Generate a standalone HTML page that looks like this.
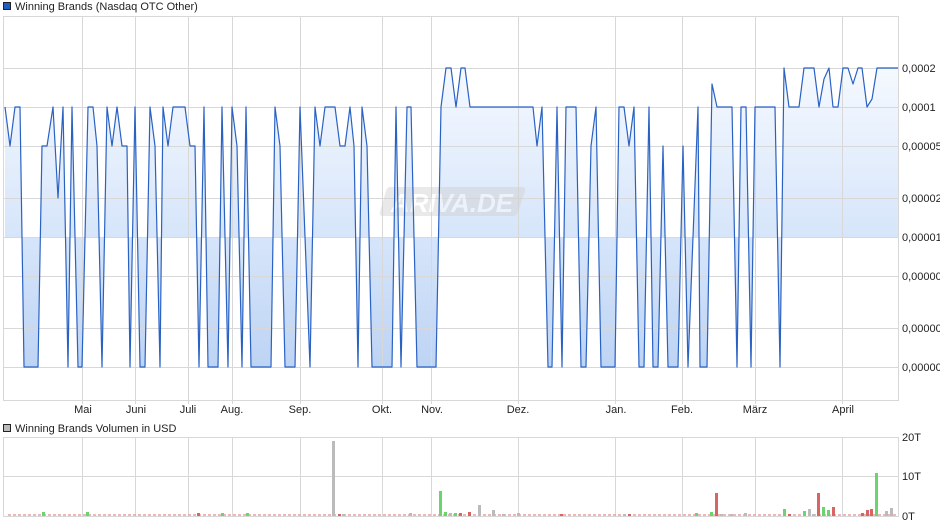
<!DOCTYPE html>
<html><head><meta charset="utf-8"><style>
html,body{margin:0;padding:0;background:#fff;}
body{width:940px;height:526px;overflow:hidden;font-family:"Liberation Sans",sans-serif;}
svg{display:block}
text{font-family:"Liberation Sans",sans-serif;font-size:11px;fill:#222}
</style></head><body>
<svg width="940" height="526" viewBox="0 0 940 526" xmlns="http://www.w3.org/2000/svg">
<defs>
<linearGradient id="g" gradientUnits="userSpaceOnUse" x1="0" y1="68" x2="0" y2="367">
<stop offset="0" stop-color="#f5f9ff"/>
<stop offset="0.565" stop-color="#d6e5fa"/>
<stop offset="1" stop-color="#bed4f4"/>
</linearGradient>
</defs>
<rect x="3.5" y="2.5" width="7" height="7" fill="#1f5fbf" stroke="#222" stroke-width="1"/>
<text x="15" y="10">Winning Brands (Nasdaq OTC Other)</text>
<polygon fill="url(#g)" points="5,237 5,107 10,146 15,107 20,107 24,367 38,367 42,146 47,146 53,107 58,198 63,107 68,367 72,107 78,367 82,367 88,107 93,107 97,146 102,367 107,107 112,146 117,107 122,146 127,146 130,367 135,107 140,367 145,367 150,107 155,146 160,367 163,107 168,146 173,107 185,107 190,146 195,146 199,367 204,107 208,367 218,367 222,107 228,367 232,107 237,146 242,367 246,107 251,367 271,367 275,107 280,146 285,367 295,367 300,107 310,367 315,107 320,146 325,107 335,107 340,146 345,146 350,107 354,146 358,367 362,107 367,146 372,367 392,367 396,107 401,367 407,107 411,107 417,367 436,367 441,107 446,68 451,68 456,107 461,68 465,68 470,107 533,107 537,146 542,107 548,367 552,367 557,107 562,367 566,107 576,107 581,367 586,367 591,146 596,107 601,367 615,367 619,107 624,107 629,146 634,107 639,367 644,367 649,107 653,367 658,367 663,146 668,367 678,367 683,146 688,367 698,107 700,367 707,367 712,84 717,107 732,107 737,367 741,107 746,107 751,367 755,107 775,107 780,367 784,68 789,107 799,107 804,68 814,68 819,107 824,79 829,68 833,107 838,107 843,68 848,68 853,84 858,68 862,68 867,107 872,99 877,68 898,68 898,237"/>
<g stroke="#d8d8d8" stroke-width="1">
<line x1="3" y1="16.5" x2="898" y2="16.5"/>
<line x1="3" y1="68.5" x2="898" y2="68.5"/>
<line x1="3" y1="107.5" x2="898" y2="107.5"/>
<line x1="3" y1="146.5" x2="898" y2="146.5"/>
<line x1="3" y1="198.5" x2="898" y2="198.5"/>
<line x1="3" y1="237.5" x2="898" y2="237.5"/>
<line x1="3" y1="276.5" x2="898" y2="276.5"/>
<line x1="3" y1="328.5" x2="898" y2="328.5"/>
<line x1="3" y1="367.5" x2="898" y2="367.5"/>
<line x1="3.5" y1="16" x2="3.5" y2="401"/>
<line x1="898.5" y1="16" x2="898.5" y2="401"/>
<line x1="3" y1="400.5" x2="898" y2="400.5"/>
<line x1="82.5" y1="16" x2="82.5" y2="404"/>
<line x1="135.5" y1="16" x2="135.5" y2="404"/>
<line x1="188.5" y1="16" x2="188.5" y2="404"/>
<line x1="232.5" y1="16" x2="232.5" y2="404"/>
<line x1="300.5" y1="16" x2="300.5" y2="404"/>
<line x1="382.5" y1="16" x2="382.5" y2="404"/>
<line x1="431.5" y1="16" x2="431.5" y2="404"/>
<line x1="518.5" y1="16" x2="518.5" y2="404"/>
<line x1="615.5" y1="16" x2="615.5" y2="404"/>
<line x1="682.5" y1="16" x2="682.5" y2="404"/>
<line x1="755.5" y1="16" x2="755.5" y2="404"/>
<line x1="842.5" y1="16" x2="842.5" y2="404"/>
</g>
<g opacity="0.45">
<path d="M390 187 H522 Q526 187 525 191 L518 212 Q517 216 513 216 H383 Q379 216 380 212 L386 191 Q387 187 390 187 Z" fill="#d0d0d0"/>
<text x="452" y="212" text-anchor="middle" font-style="italic" font-weight="bold" style="font-size:26px;fill:#fff">ARIVA.DE</text>
</g>
<polyline fill="none" stroke="#2a62c4" stroke-width="1.2" stroke-linejoin="round" points="5,107 10,146 15,107 20,107 24,367 38,367 42,146 47,146 53,107 58,198 63,107 68,367 72,107 78,367 82,367 88,107 93,107 97,146 102,367 107,107 112,146 117,107 122,146 127,146 130,367 135,107 140,367 145,367 150,107 155,146 160,367 163,107 168,146 173,107 185,107 190,146 195,146 199,367 204,107 208,367 218,367 222,107 228,367 232,107 237,146 242,367 246,107 251,367 271,367 275,107 280,146 285,367 295,367 300,107 310,367 315,107 320,146 325,107 335,107 340,146 345,146 350,107 354,146 358,367 362,107 367,146 372,367 392,367 396,107 401,367 407,107 411,107 417,367 436,367 441,107 446,68 451,68 456,107 461,68 465,68 470,107 533,107 537,146 542,107 548,367 552,367 557,107 562,367 566,107 576,107 581,367 586,367 591,146 596,107 601,367 615,367 619,107 624,107 629,146 634,107 639,367 644,367 649,107 653,367 658,367 663,146 668,367 678,367 683,146 688,367 698,107 700,367 707,367 712,84 717,107 732,107 737,367 741,107 746,107 751,367 755,107 775,107 780,367 784,68 789,107 799,107 804,68 814,68 819,107 824,79 829,68 833,107 838,107 843,68 848,68 853,84 858,68 862,68 867,107 872,99 877,68 898,68"/>
<text x="902" y="72">0,0002</text>
<text x="902" y="111">0,0001</text>
<text x="902" y="150">0,00005</text>
<text x="902" y="202">0,00002</text>
<text x="902" y="241">0,00001</text>
<text x="902" y="280">0,000005</text>
<text x="902" y="332">0,000002</text>
<text x="902" y="371">0,000001</text>
<g text-anchor="middle">
<text x="83" y="413">Mai</text><text x="136" y="413">Juni</text><text x="188" y="413">Juli</text><text x="232" y="413">Aug.</text>
<text x="300" y="413">Sep.</text><text x="382" y="413">Okt.</text><text x="432" y="413">Nov.</text><text x="518" y="413">Dez.</text>
<text x="616" y="413">Jan.</text><text x="682" y="413">Feb.</text><text x="755" y="413">März</text><text x="843" y="413">April</text>
</g>
<rect x="3.5" y="424.5" width="7" height="7" fill="#bbb" stroke="#222" stroke-width="1"/>
<text x="15" y="432">Winning Brands Volumen in USD</text>
<g stroke="#d8d8d8" stroke-width="1">
<line x1="3" y1="437.5" x2="898" y2="437.5"/>
<line x1="3" y1="476.5" x2="898" y2="476.5"/>
<line x1="3" y1="516.5" x2="898" y2="516.5"/>
<line x1="3.5" y1="437" x2="3.5" y2="517"/>
<line x1="898.5" y1="437" x2="898.5" y2="517"/>
<line x1="82.5" y1="437" x2="82.5" y2="517"/><line x1="135.5" y1="437" x2="135.5" y2="517"/><line x1="188.5" y1="437" x2="188.5" y2="517"/><line x1="232.5" y1="437" x2="232.5" y2="517"/><line x1="300.5" y1="437" x2="300.5" y2="517"/><line x1="382.5" y1="437" x2="382.5" y2="517"/><line x1="431.5" y1="437" x2="431.5" y2="517"/><line x1="518.5" y1="437" x2="518.5" y2="517"/><line x1="615.5" y1="437" x2="615.5" y2="517"/><line x1="682.5" y1="437" x2="682.5" y2="517"/><line x1="755.5" y1="437" x2="755.5" y2="517"/><line x1="842.5" y1="437" x2="842.5" y2="517"/>
</g>
<g>
<path d="M8 515h890" stroke="#e8a0a0" stroke-width="1.5" stroke-dasharray="3 2"/>
<rect x="42" y="512" width="3" height="4" fill="#6cd46c"/>
<rect x="86" y="512" width="3" height="4" fill="#6cd46c"/>
<rect x="197" y="513" width="3" height="3" fill="#d96464"/>
<rect x="221" y="513" width="3" height="3" fill="#6cd46c"/>
<rect x="246" y="513" width="3" height="3" fill="#6cd46c"/>
<rect x="332" y="441" width="3" height="75" fill="#bbb"/>
<rect x="338" y="514" width="3" height="2" fill="#d96464"/>
<rect x="342" y="514" width="3" height="2" fill="#bbb"/>
<rect x="409" y="513" width="3" height="3" fill="#bbb"/>
<rect x="439" y="491" width="3" height="25" fill="#6cd46c"/>
<rect x="444" y="512" width="3" height="4" fill="#6cd46c"/>
<rect x="449" y="513" width="3" height="3" fill="#bbb"/>
<rect x="454" y="513" width="3" height="3" fill="#6cd46c"/>
<rect x="459" y="513" width="3" height="3" fill="#d96464"/>
<rect x="468" y="512" width="3" height="4" fill="#d96464"/>
<rect x="478" y="505" width="3" height="11" fill="#bbb"/>
<rect x="492" y="510" width="3" height="6" fill="#bbb"/>
<rect x="502" y="514" width="3" height="2" fill="#bbb"/>
<rect x="517" y="513" width="3" height="3" fill="#bbb"/>
<rect x="560" y="514" width="3" height="2" fill="#d96464"/>
<rect x="623" y="514" width="3" height="2" fill="#bbb"/>
<rect x="628" y="514" width="3" height="2" fill="#d96464"/>
<rect x="695" y="513" width="3" height="3" fill="#6cd46c"/>
<rect x="710" y="512" width="3" height="4" fill="#6cd46c"/>
<rect x="715" y="493" width="3" height="23" fill="#d96464"/>
<rect x="720" y="514" width="3" height="2" fill="#bbb"/>
<rect x="730" y="514" width="3" height="2" fill="#bbb"/>
<rect x="744" y="513" width="3" height="3" fill="#bbb"/>
<rect x="783" y="509" width="3" height="7" fill="#6cd46c"/>
<rect x="788" y="514" width="3" height="2" fill="#d96464"/>
<rect x="803" y="511" width="3" height="5" fill="#6cd46c"/>
<rect x="808" y="509" width="3" height="7" fill="#bbb"/>
<rect x="812" y="514" width="3" height="2" fill="#bbb"/>
<rect x="817" y="493" width="3" height="23" fill="#d96464"/>
<rect x="822" y="507" width="3" height="9" fill="#6cd46c"/>
<rect x="827" y="510" width="3" height="6" fill="#6cd46c"/>
<rect x="832" y="507" width="3" height="9" fill="#d96464"/>
<rect x="861" y="513" width="3" height="3" fill="#d96464"/>
<rect x="866" y="510" width="3" height="6" fill="#d96464"/>
<rect x="870" y="509" width="3" height="7" fill="#d96464"/>
<rect x="875" y="473" width="3" height="43" fill="#6cd46c"/>
<rect x="885" y="511" width="3" height="5" fill="#bbb"/>
<rect x="890" y="508" width="3" height="8" fill="#bbb"/>
</g>
<text x="902" y="441">20T</text>
<text x="902" y="480">10T</text>
<text x="902" y="520">0T</text>
</svg>
</body></html>
